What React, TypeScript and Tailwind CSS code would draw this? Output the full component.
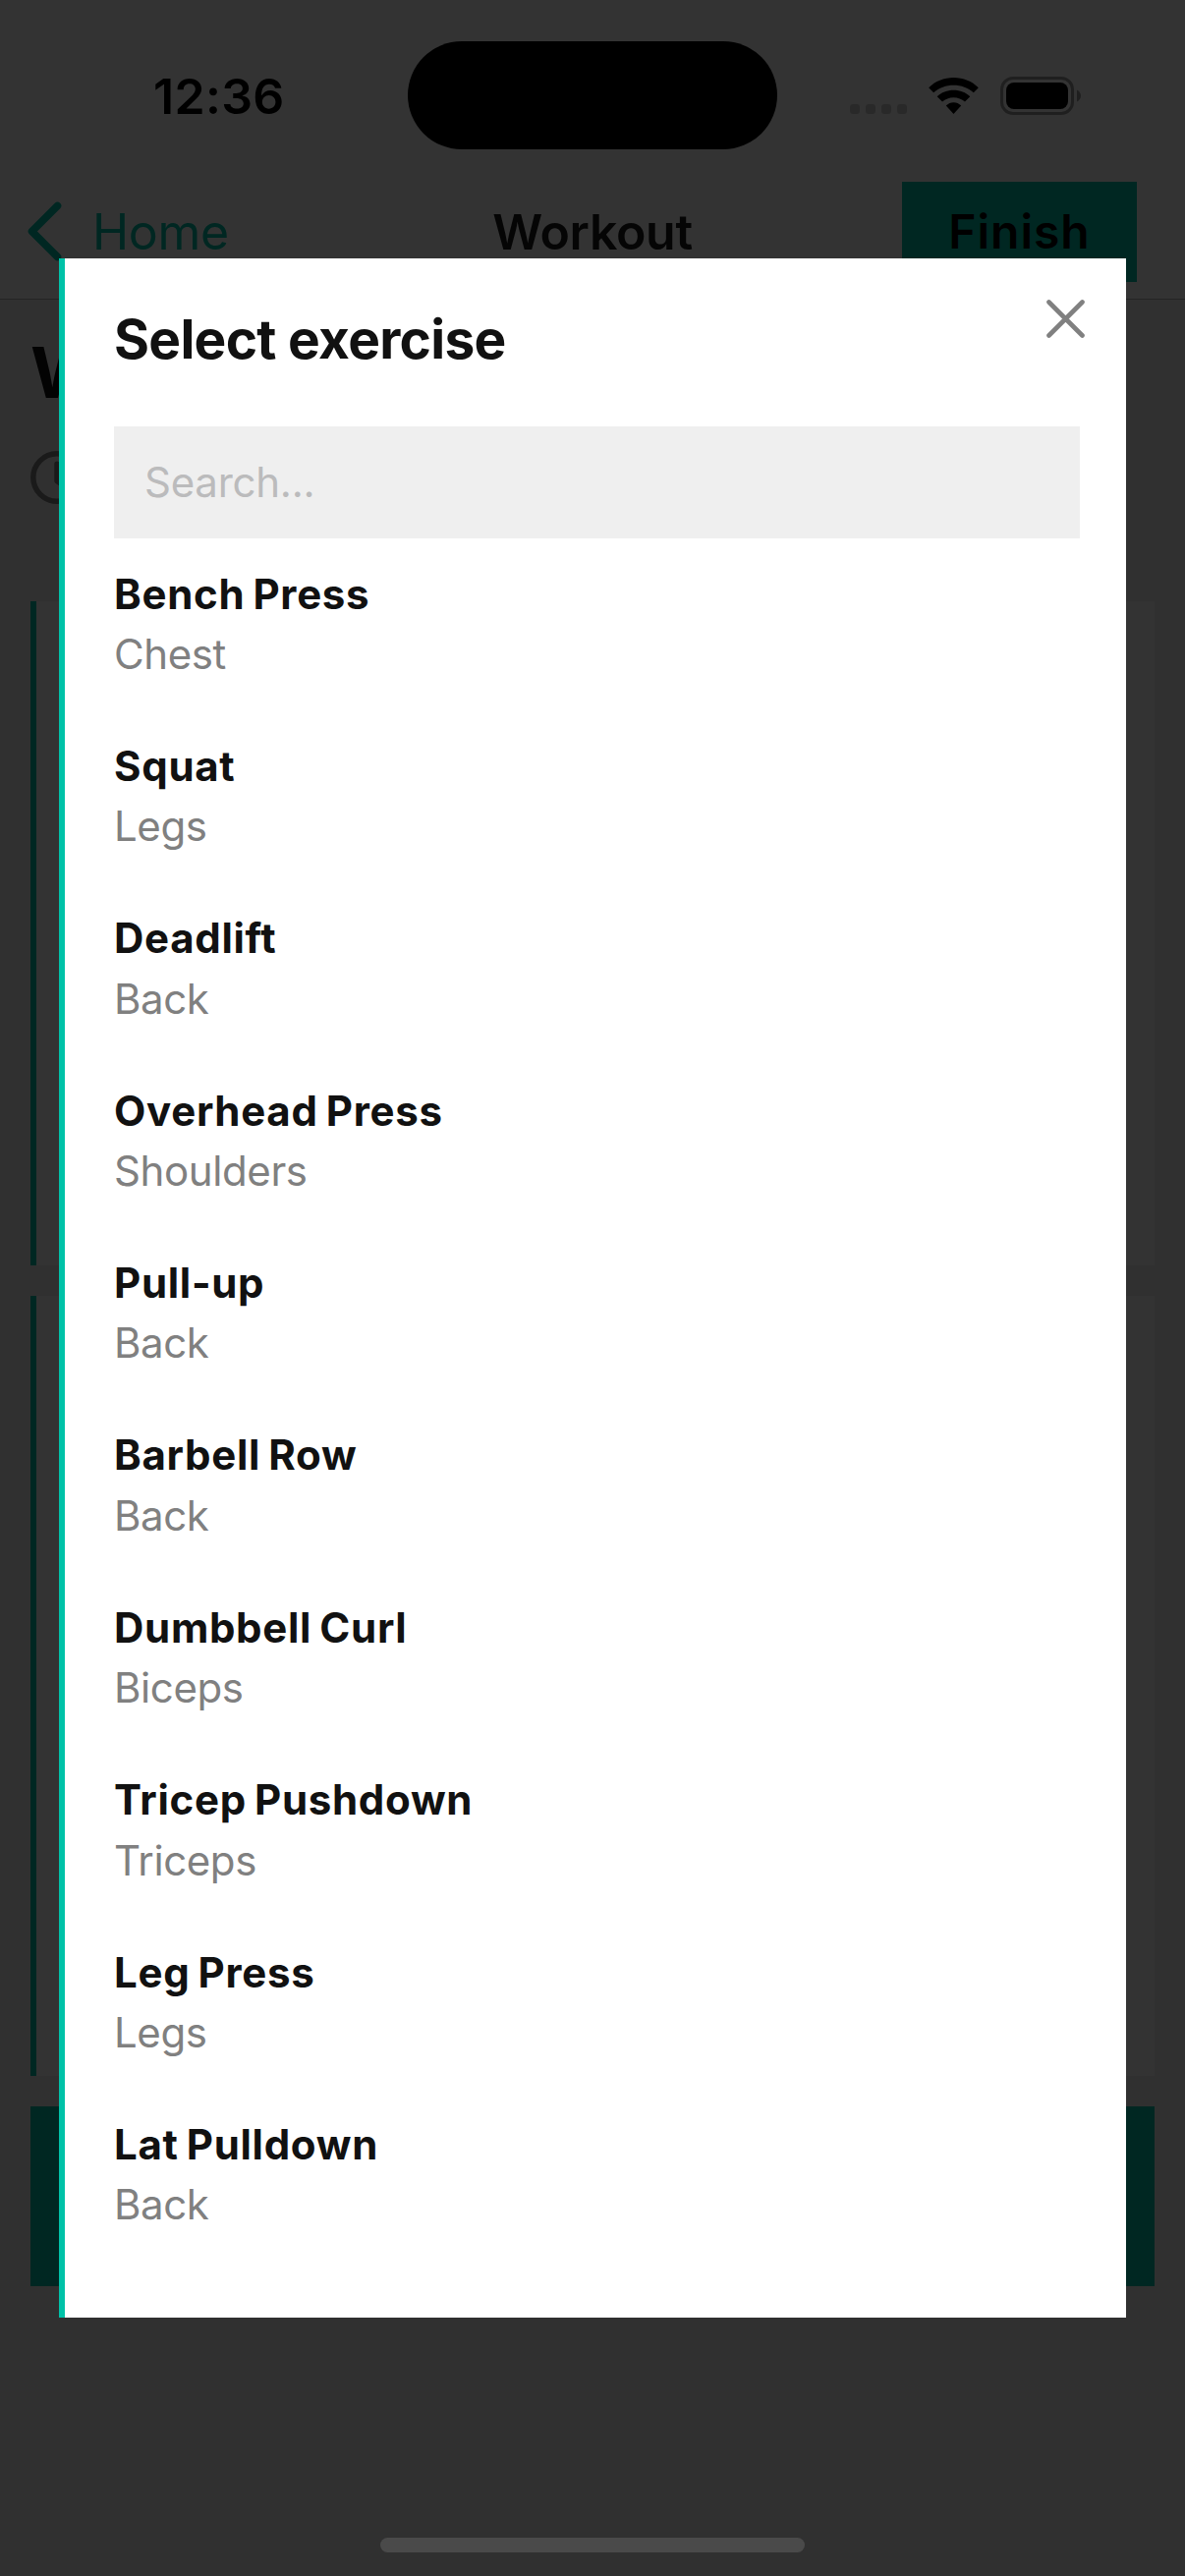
const EXERCISES = [
  { name: 'Bench Press', group: 'Chest' },
  { name: 'Squat', group: 'Legs' },
  { name: 'Deadlift', group: 'Back' },
  { name: 'Overhead Press', group: 'Shoulders' },
  { name: 'Pull-up', group: 'Back' },
  { name: 'Barbell Row', group: 'Back' },
  { name: 'Dumbbell Curl', group: 'Biceps' },
  { name: 'Tricep Pushdown', group: 'Triceps' },
  { name: 'Leg Press', group: 'Legs' },
  { name: 'Lat Pulldown', group: 'Back' },
];

function WifiIcon() {
  return (
    <svg className="block h-[38px] w-[51px]" viewBox="0 0 51 38" fill="#000">
      <path d="M25.5 1C35.300 1 44.200 4.700 50.800 11.200L45.800 16.300C40.300 11.300 33.200 8.700 25.500 8.700C17.800 8.700 10.700 11.300 5.200 16.300L0.200 11.200C6.800 4.700 15.700 1 25.500 1Z" />
      <path d="M25.500 13.800C32 13.800 37.900 16.200 42.300 20.200L37 25.600C33.900 22.900 29.900 21.300 25.500 21.300C21.100 21.300 17.100 22.900 14 25.600L8.700 20.200C13.100 16.200 19 13.800 25.500 13.800Z" />
      <path d="M25.500 26.200C28.400 26.200 31.100 27.300 33.200 29.600L25.500 38L17.800 29.600C19.900 27.300 22.600 26.200 25.500 26.200Z" />
    </svg>
  );
}

function BatteryIcon() {
  return (
    <svg className="block h-[39px] w-[83px]" viewBox="0 0 83 39">
      <rect x="1.500" y="1.500" width="72" height="36" rx="11.500" fill="none" stroke="#9c9c9c" strokeWidth="3" />
      <rect x="6" y="6" width="63" height="27" rx="8" fill="#000" />
      <path d="M78 13.500C80.500 14.500 82 16.900 82 19.500C82 22.100 80.500 24.500 78 25.500Z" fill="#9c9c9c" />
    </svg>
  );
}

function StatusBar() {
  return (
    <div className="flex h-[185px] items-start justify-between pl-[156px] pr-[105px] pt-[78px]">
      <span className="-mt-[10px] text-[50px] font-semibold leading-[60px] tracking-[0.3px] text-black">12:36</span>
      <div className="flex items-start">
        <div className="mr-[22px] mt-[28px] flex gap-[6px]">
          {[0, 1, 2, 3].map((i) => (
            <span key={i} className="size-[10px] rounded-[3px] bg-[#cdcdcd]" />
          ))}
        </div>
        <WifiIcon />
        <div className="ml-[22px]">
          <BatteryIcon />
        </div>
      </div>
    </div>
  );
}

function NavBar() {
  return (
    <div className="grid h-[120px] grid-cols-3 border-b border-[#bbbbbb]">
      <div className="flex items-start pl-[28px] text-[#00c2a8]">
        <svg className="mt-[20px] block h-[61px] w-[36px]" viewBox="0 0 36 61" fill="none">
          <path d="M30.500 4.500L4.500 30.500L30.500 56.500" stroke="currentColor" strokeWidth="7.600" strokeLinecap="round" strokeLinejoin="round" />
        </svg>
        <span className="ml-[30px] mt-[21px] text-[50px] leading-[60px] tracking-[-0.3px]">Home</span>
      </div>
      <span className="mt-[21px] text-center text-[50px] font-semibold leading-[60px] tracking-[-0.3px] text-[#1c1c1c]">
        Workout
      </span>
      <div className="flex justify-end pr-[49px]">
        <div className="flex h-[102px] w-[239px] justify-center bg-[#00c2a8] pt-[21px] text-[48px] font-semibold leading-[60px] tracking-[1px] text-black">
          Finish
        </div>
      </div>
    </div>
  );
}

function WorkoutScreen() {
  return (
    <div className="flex h-full flex-col bg-[#f0f0f0]">
      <div className="bg-white">
        <StatusBar />
        <NavBar />
      </div>
      <div className="flex h-[307px] flex-col items-start pl-[31px]">
        <h1 className="mt-[30px] text-[72px] font-bold leading-[88px] text-[#111111]">W</h1>
        <svg className="mt-[36px] block size-[54px]" viewBox="0 0 54 54" fill="none" stroke="#808080" strokeWidth="5.500">
          <circle cx="27" cy="27" r="24.200" />
          <path d="M27 13.200V30.500L38 38.500" strokeLinecap="round" strokeLinejoin="round" />
        </svg>
      </div>
      <div className="flex flex-col gap-[31px] px-[31px]">
        <div className="h-[676px] border-l-6 border-[#00c2a8] bg-white" />
        <div className="h-[794px] border-l-6 border-[#00c2a8] bg-white" />
        <div className="h-[183px] bg-[#00c2a8]" />
      </div>
    </div>
  );
}

function ExerciseDialog() {
  return (
    <div className="flex h-[2096px] w-[1086px] flex-col border-l-6 border-[#00c2a8] bg-white pl-[50px] pr-[47px] pt-[50px]">
      <div className="flex h-[121px] items-start justify-between">
        <h2 className="text-[55px] font-bold leading-[64px] tracking-[-0.7px] text-[#111111]">Select exercise</h2>
        <svg className="-mr-[5px] -mt-[8px] block size-[39px]" viewBox="0 0 39 39" fill="none">
          <path d="M2.500 2.500L36.500 36.500M36.500 2.500L2.500 36.500" stroke="#808080" strokeWidth="4.600" strokeLinecap="round" />
        </svg>
      </div>
      <div className="flex h-[114px] items-center bg-[#efefef] pb-[2px] pl-[31px] text-[42px] tracking-[-0.25px] text-[#bbbbbc]">
        Search...
      </div>
      <ul className="mt-[25.5px]">
        {EXERCISES.map((e) => (
          <li key={e.name} className="h-[175.4px] text-[42px] leading-[61.400px]">
            <p className="font-bold tracking-[0.7px] text-[#111111] [word-spacing:-2.5px]">{e.name}</p>
            <p className="tracking-[-0.4px] text-[#808080]">{e.group}</p>
          </li>
        ))}
      </ul>
    </div>
  );
}

export default function App() {
  return (
    <div className="relative h-[2622px] w-[1206px] overflow-hidden font-['Inter',sans-serif]">
      <WorkoutScreen />
      <div className="absolute inset-0 flex items-center justify-center bg-black/80">
        <ExerciseDialog />
      </div>
      <div className="absolute left-[415px] top-[42px] h-[110px] w-[376px] rounded-full bg-black" />
      <div className="absolute left-[387px] top-[2583px] h-[15px] w-[432px] rounded-full bg-[#4a4a4a]" />
    </div>
  );
}
